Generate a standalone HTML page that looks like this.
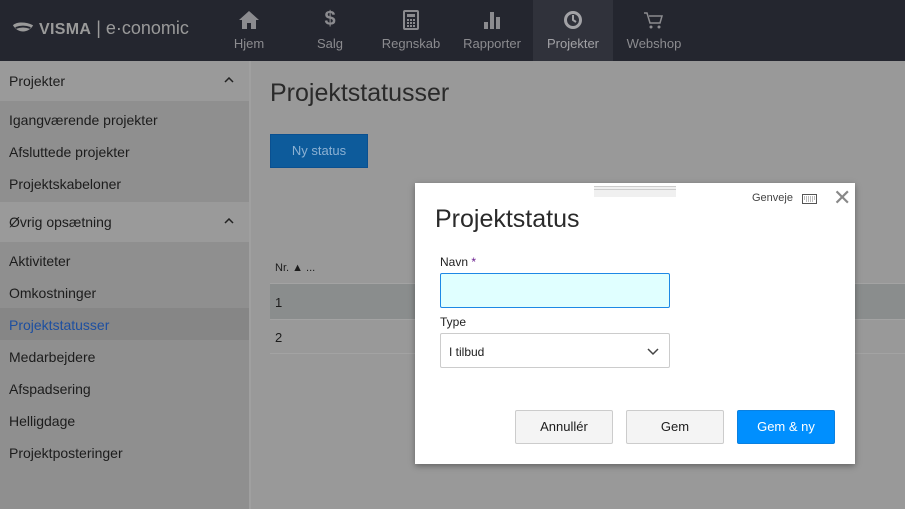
<!DOCTYPE html>
<html><head><meta charset="utf-8"><style>
*{box-sizing:border-box;margin:0;padding:0}
body{width:905px;height:509px;overflow:hidden;background:#999;font-family:"Liberation Sans",sans-serif;position:relative;color:#1c1c1c}
.top{position:absolute;left:0;top:0;width:905px;height:61px;background:#24262f}
.logo{position:absolute;left:12px;top:18px;color:#9a9a9a;font-size:18px;white-space:nowrap}
.logo b{font-weight:bold;letter-spacing:0.3px;font-size:16px}
.nav{position:absolute;top:0;height:61px;width:80px;text-align:center;color:#8b8b8f;font-size:13px}
.nav span{position:absolute;left:0;right:0;top:36px}
.nav svg{position:absolute;left:29px;top:10px}
.side{position:absolute;left:0;top:61px;width:251px;height:448px;background:#8f8f8f;border-right:2px solid #a0a0a0}
.sh{height:40px;background:#9a9a9a;padding:12px 9px;font-size:14px;position:relative}
.sh svg{position:absolute;right:15px;top:16px}
.si{height:32px;padding:9px 9px;font-size:14px}
.main{position:absolute;left:253px;top:61px;right:0;bottom:0}
h1{position:absolute;left:17px;top:18px;font-weight:normal;font-size:25px;color:#2a2a2a}
.btn{position:absolute;left:17px;top:73px;width:98px;height:34px;background:#0d5b9b;border:1px solid #0a5090;color:#8cb1d3;font-size:13px;text-align:center;line-height:32px}
.modal{position:absolute;left:415px;top:183px;width:440px;height:281px;background:#fff;box-shadow:0 2px 6px rgba(0,0,0,.35)}
label{position:absolute;left:25px;font-size:12px;color:#222}
.in{position:absolute;left:25px;width:230px;height:35px;border:1px solid #ccc;border-radius:2px}
.b{position:absolute;top:227px;width:98px;height:34px;border:1px solid #ccc;background:#f4f4f4;font-size:13px;text-align:center;line-height:32px;border-radius:2px}
</style></head><body>
<div class="top">
<div class="logo"><svg width="22" height="14" viewBox="0 0 24 14" style="vertical-align:-1px"><path d="M1 4c4-4 14-4 22 0c-4 8-16 10-22 0z" fill="#9a9a9a"/><path d="M4 7c5-2 11-2 16 0" stroke="#24262f" stroke-width="2" fill="none"/></svg> <b>VISMA</b> | e·conomic</div>
<div class="nav" style="left:209px"><svg width="22" height="20" viewBox="0 0 22 20"><path d="M11 1L1 10h3v9h5v-6h4v6h5v-9h3z" fill="#8b8b8f"/></svg><span>Hjem</span></div>
<div class="nav" style="left:290px"><div style="position:absolute;left:0;right:0;top:8px;font-size:20px;font-weight:bold">$</div><span>Salg</span></div>
<div class="nav" style="left:371px"><svg width="22" height="20" viewBox="0 0 22 20"><rect x="4" y="1" width="14" height="18" rx="1" fill="none" stroke="#8b8b8f" stroke-width="2"/><rect x="7" y="4" width="8" height="3" fill="#8b8b8f"/><path d="M7 10h2M10 10h2M13 10h2M7 13h2M10 13h2M13 13h2M7 16h2M10 16h2M13 16h2" stroke="#8b8b8f" stroke-width="2"/></svg><span>Regnskab</span></div>
<div class="nav" style="left:452px"><svg width="22" height="20" viewBox="0 0 22 20"><rect x="3" y="12" width="4" height="7" fill="#8b8b8f"/><rect x="9" y="2" width="4" height="17" fill="#8b8b8f"/><rect x="15" y="7" width="4" height="12" fill="#8b8b8f"/></svg><span>Rapporter</span></div>
<div class="nav" style="left:533px;background:#30323b;color:#a2a2a6"><svg width="22" height="20" viewBox="0 0 22 20"><circle cx="11" cy="10" r="7.5" fill="none" stroke="#a2a2a6" stroke-width="3"/><path d="M11 5v5l3 2" stroke="#a2a2a6" stroke-width="2" fill="none"/></svg><span>Projekter</span></div>
<div class="nav" style="left:614px"><svg width="22" height="20" viewBox="0 0 22 20"><path d="M1 3h3l3 10h10l2-7H6" stroke="#8b8b8f" stroke-width="1.5" fill="none"/><circle cx="8" cy="17" r="1.5" fill="#8b8b8f"/><circle cx="16" cy="17" r="1.5" fill="#8b8b8f"/></svg><span>Webshop</span></div>
</div>
<div class="side">
<div class="sh">Projekter<svg width="10" height="6"><path d="M1 5l4-4 4 4" stroke="#222" stroke-width="1.5" fill="none"/></svg></div>
<div class="si" style="margin-top:2px">Igangværende projekter</div>
<div class="si">Afsluttede projekter</div>
<div class="si">Projektskabeloner</div>
<div class="sh" style="margin-top:3px">Øvrig opsætning<svg width="10" height="6"><path d="M1 5l4-4 4 4" stroke="#222" stroke-width="1.5" fill="none"/></svg></div>
<div class="si" style="margin-top:2px">Aktiviteter</div>
<div class="si">Omkostninger</div>
<div class="si" style="background:#868686;color:#1d4fa0">Projektstatusser</div>
<div class="si">Medarbejdere</div>
<div class="si">Afspadsering</div>
<div class="si">Helligdage</div>
<div class="si">Projektposteringer</div>
</div>
<div class="main">
<h1>Projektstatusser</h1>
<div class="btn">Ny status</div>
<div style="position:absolute;left:22px;top:201px;font-size:11px">Nr. ▲ ...</div>
<div style="position:absolute;left:17px;top:222px;right:0;height:37px;background:#8a8d8d;border-top:1px solid #a3a3a3;border-bottom:1px solid #a3a3a3;font-size:13px;padding:11px 5px">1</div>
<div style="position:absolute;left:17px;top:259px;right:0;height:34px;border-bottom:1px solid #a3a3a3;font-size:13px;padding:10px 5px">2</div>
</div>
<div class="modal">
<div style="position:absolute;left:179px;top:3px;width:82px;height:11px;background:#f0f0f0;border-top:4px double #ccc"></div>
<div style="position:absolute;left:337px;top:9px;font-size:11px;color:#444">Genveje</div>
<svg style="position:absolute;left:387px;top:11px" width="15" height="10" viewBox="0 0 15 10"><rect x=".5" y=".5" width="14" height="9" fill="none" stroke="#555"/><path d="M2 3h11M2 5h11M4 7h7" stroke="#777" stroke-dasharray="1 1"/></svg>
<div style="position:absolute;left:418px;top:2px;font-size:22px;color:#888">✕</div>
<div style="position:absolute;left:20px;top:22px;font-size:25px;font-weight:normal;color:#2a2a2a">Projektstatus</div>
<label style="top:72px">Navn <span style="color:#6b1f8f">*</span></label>
<div class="in" style="top:90px;background:#e0ffff;border-color:#1e88e5"></div>
<label style="top:132px">Type</label>
<div class="in" style="top:150px;font-size:12px;padding:11px 8px">I tilbud<svg style="position:absolute;right:10px;top:14px" width="12" height="8"><path d="M1 1l5 5 5-5" stroke="#444" stroke-width="1.5" fill="none"/></svg></div>
<div class="b" style="left:100px">Annullér</div>
<div class="b" style="left:211px">Gem</div>
<div class="b" style="left:322px;background:#008ffe;border-color:#0a80e0;color:#fff">Gem &amp; ny</div>
</div>
</body></html>
